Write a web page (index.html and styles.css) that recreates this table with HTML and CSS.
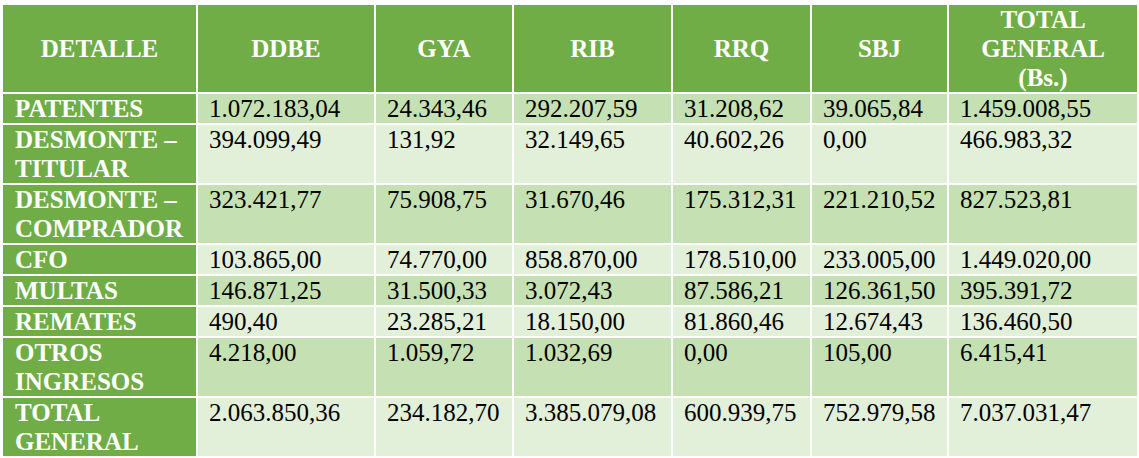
FILE: index.html
```html
<!DOCTYPE html>
<html>
<head>
<meta charset="utf-8">
<title>Ingresos</title>
<link rel="stylesheet" href="styles.css">
</head>
<body>
<table class="grid">
  <colgroup>
    <col class="c1"><col class="c2"><col class="c3"><col class="c4"><col class="c5"><col class="c6"><col class="c7">
  </colgroup>
  <tr class="head">
    <th class="hd">DETALLE</th>
    <th class="hd">DDBE</th>
    <th class="hd">GYA</th>
    <th class="hd">RIB</th>
    <th class="hd">RRQ</th>
    <th class="hd">SBJ</th>
    <th class="hd">TOTAL<br>GENERAL<br>(Bs.)</th>
  </tr>
  <tr class="dark">
    <th class="rh">PATENTES</th>
    <td class="v">1.072.183,04</td><td class="v">24.343,46</td><td class="v">292.207,59</td><td class="v">31.208,62</td><td class="v">39.065,84</td><td class="v">1.459.008,55</td>
  </tr>
  <tr class="light">
    <th class="rh">DESMONTE –<br>TITULAR</th>
    <td class="v">394.099,49</td><td class="v">131,92</td><td class="v">32.149,65</td><td class="v">40.602,26</td><td class="v">0,00</td><td class="v">466.983,32</td>
  </tr>
  <tr class="dark">
    <th class="rh">DESMONTE –<br>COMPRADOR</th>
    <td class="v">323.421,77</td><td class="v">75.908,75</td><td class="v">31.670,46</td><td class="v">175.312,31</td><td class="v">221.210,52</td><td class="v">827.523,81</td>
  </tr>
  <tr class="light">
    <th class="rh">CFO</th>
    <td class="v">103.865,00</td><td class="v">74.770,00</td><td class="v">858.870,00</td><td class="v">178.510,00</td><td class="v">233.005,00</td><td class="v">1.449.020,00</td>
  </tr>
  <tr class="dark">
    <th class="rh">MULTAS</th>
    <td class="v">146.871,25</td><td class="v">31.500,33</td><td class="v">3.072,43</td><td class="v">87.586,21</td><td class="v">126.361,50</td><td class="v">395.391,72</td>
  </tr>
  <tr class="light">
    <th class="rh">REMATES</th>
    <td class="v">490,40</td><td class="v">23.285,21</td><td class="v">18.150,00</td><td class="v">81.860,46</td><td class="v">12.674,43</td><td class="v">136.460,50</td>
  </tr>
  <tr class="dark">
    <th class="rh">OTROS<br>INGRESOS</th>
    <td class="v">4.218,00</td><td class="v">1.059,72</td><td class="v">1.032,69</td><td class="v">0,00</td><td class="v">105,00</td><td class="v">6.415,41</td>
  </tr>
  <tr class="light">
    <th class="rh">TOTAL<br>GENERAL</th>
    <td class="v">2.063.850,36</td><td class="v">234.182,70</td><td class="v">3.385.079,08</td><td class="v">600.939,75</td><td class="v">752.979,58</td><td class="v">7.037.031,47</td>
  </tr>
</table>
</body>
</html>
```
FILE: styles.css
```css
body {
  margin: 0;
  padding: 3px 0 0 1px;
  background: #ffffff;
  font-family: serif;
  font-size: 25px;
}
.grid {
  border-collapse: collapse;
  table-layout: fixed;
  width: 1136px;
  font-family: serif;
  font-size: 25px;
  line-height: 29px;
  color: #000000;
}
.c1 { width: 195px; }
.c2 { width: 178px; }
.c3 { width: 138px; }
.c4 { width: 159px; }
.c5 { width: 139px; }
.c6 { width: 137px; }
.c7 { width: 190px; }
.hd, .rh, .v {
  font-family: serif;
  border: 2px solid #ffffff;
  padding: 0 0 0 11px;
  vertical-align: top;
  text-align: left;
  white-space: nowrap;
}
.hd, .rh {
  background: #70ad47;
  color: #ffffff;
  font-weight: bold;
}
.hd {
  height: 85px;
  text-align: center;
  vertical-align: middle;
  padding: 0;
}
.rh {
  padding-left: 12px;
}
.dark .v { background: #c5e0b3; }
.light .v { background: #e2efd9; }
```
